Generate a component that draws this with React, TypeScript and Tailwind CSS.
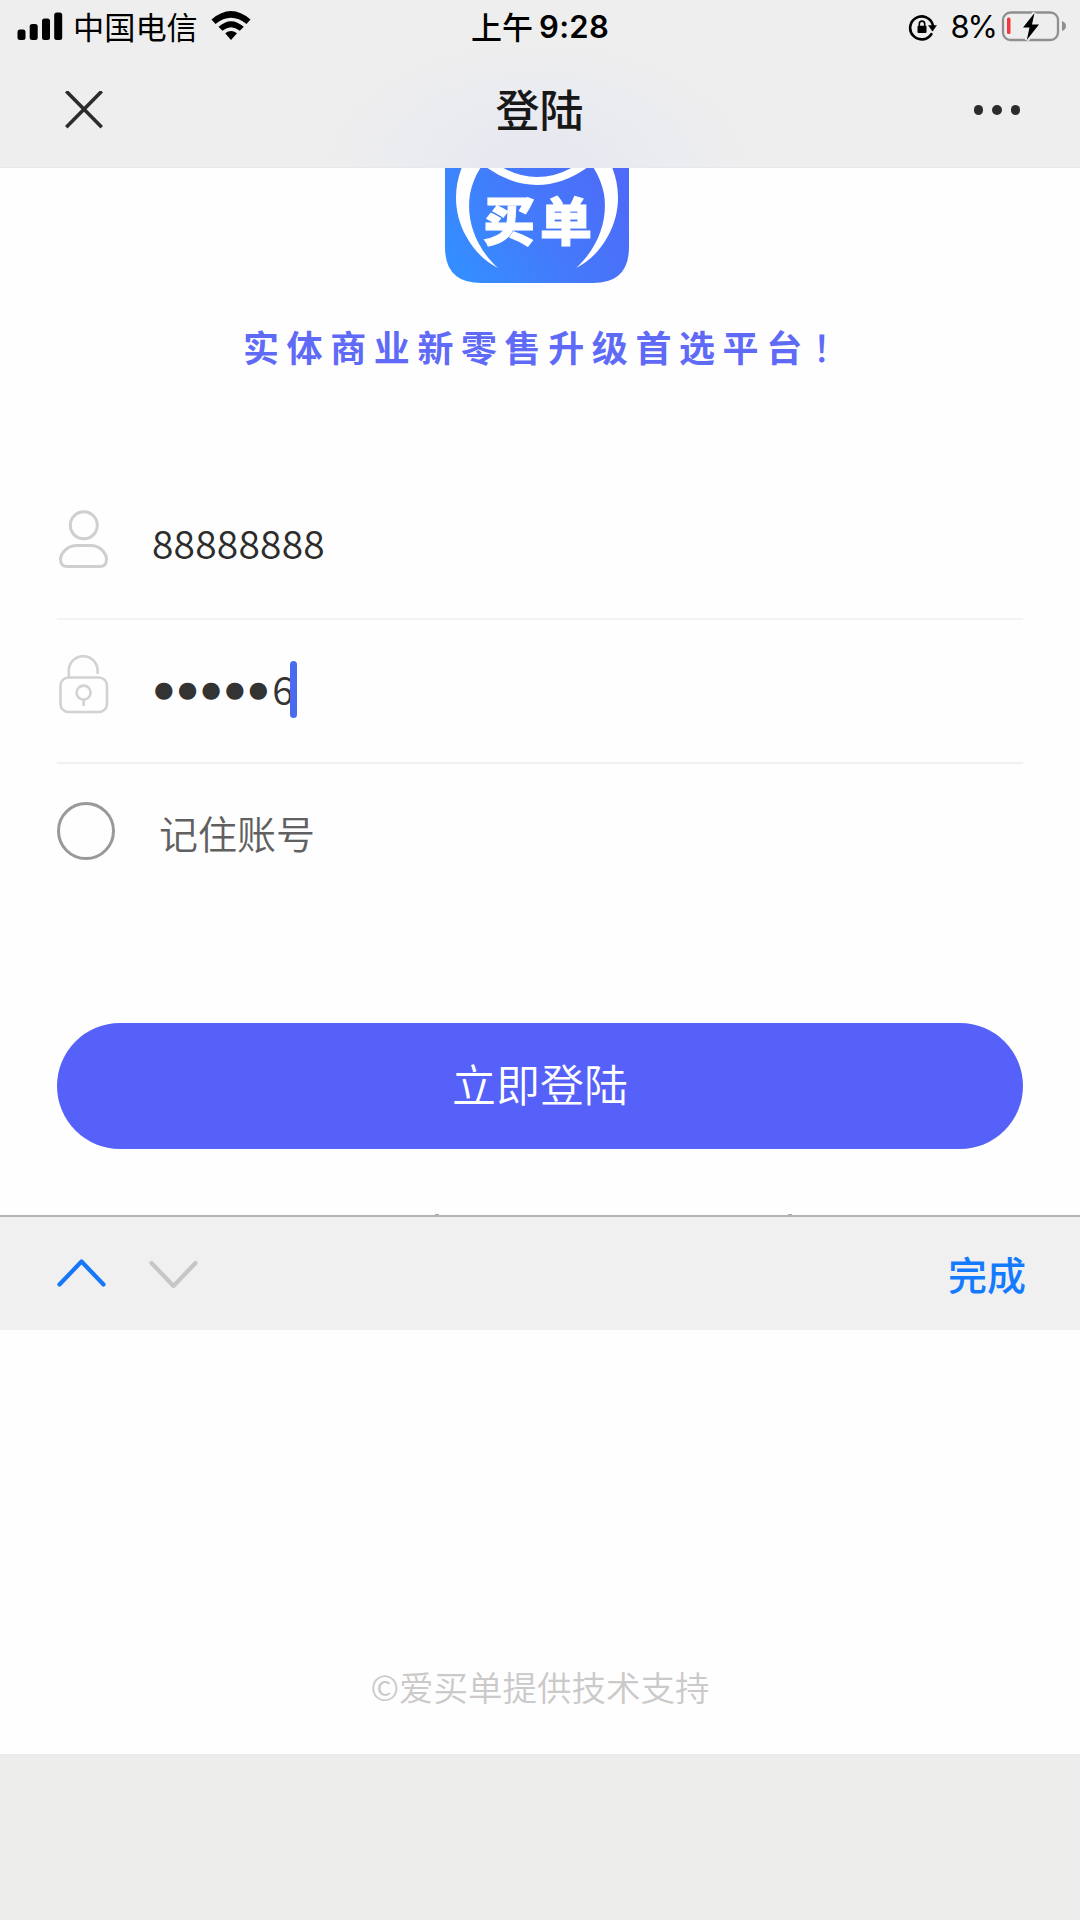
import { useState } from 'react';

const DOTS = [0, 1, 2];

function StatusBar() {
  return (
    <div className="relative flex h-14 items-start justify-between text-black">
      <div className="flex items-start pl-[17px]">
        <svg width="46" height="30" viewBox="0 0 46 30" className="mt-[11px]">
          <rect x="0.5" y="18.5" width="8" height="10.5" rx="2.5" />
          <rect x="12.7" y="13" width="8" height="16" rx="2.5" />
          <rect x="25" y="7.5" width="8" height="21.5" rx="2.5" />
          <rect x="37.2" y="1.5" width="8" height="27.5" rx="2.5" />
        </svg>
        <span className="ml-[10px] mt-[3px] text-[31.200px] leading-[46px]">中国电信</span>
        <svg width="40" height="32" viewBox="0 0 40 32" className="ml-[13px] mt-[10px]">
          <path d="M0.5 9.5 Q20 -7.500 39.500 9.500 L35.500 14 Q20 1.500 4.500 14 Z" />
          <path d="M7.500 16.800 Q20 5.500 32.800 16.800 L28.800 20.800 Q20 13.500 11.400 20.800 Z" />
          <path d="M14.200 23.300 Q20 18.500 26 23.300 L20 30 Z" />
        </svg>
      </div>
      <div className="absolute left-[471px] top-[4px] flex items-center leading-[46px]">
        <span className="-mt-[2px] text-[31px] font-medium">上午</span>
        <span className="ml-[6px] font-['Inter'] text-[31px] font-semibold tracking-[0.3px]">9:28</span>
      </div>
      <div className="flex items-start pr-[13px]">
        <svg width="30" height="28" viewBox="0 0 30 28" className="mt-[13px]">
          <path d="M23.300 21.200 A11.500 11.500 0 1 1 24.800 12" fill="none" stroke="#000" strokeWidth="2.600" strokeLinecap="round" />
          <path d="M20.500 12.500 H28.500 L24.500 18.200 Z" stroke="#000" strokeWidth="0.500" />
          <rect x="9.500" y="12.800" width="9" height="7.200" rx="1" />
          <path d="M11.300 13 V10.800 a2.700 2.700 0 0 1 5.400 0 V13" fill="none" stroke="#000" strokeWidth="1.600" />
        </svg>
        <span className="ml-[12px] mt-[4px] font-['Inter'] text-[31px] leading-[46px] tracking-[-2px]">8%</span>
        <svg width="66" height="34" viewBox="0 0 66 34" className="ml-[5px] mt-[9px]">
          <rect x="2" y="3.500" width="55" height="27.500" rx="7.500" fill="none" stroke="#8f8f8f" strokeWidth="2.300" />
          <rect x="6" y="8.500" width="3.500" height="16.500" rx="1.500" fill="#f2383a" />
          <path d="M61 12 q4 1.500 4 5 q0 3.500 -4 5 z" fill="#8f8f8f" />
          <path d="M33.500 4 L22 18.500 H28.500 L25.800 31 L38 15.500 H31 Z" fill="#000" stroke="#eee" strokeWidth="4" />
          <path d="M33.500 4 L22 18.500 H28.500 L25.800 31 L38 15.500 H31 Z" fill="#000" />
        </svg>
      </div>
    </div>
  );
}

function NavBar() {
  return (
    <div className="flex h-[108px] items-center justify-between pl-[65px] pr-[60px]">
      <button className="w-[40px]" aria-label="关闭">
        <svg width="38" height="38" viewBox="0 0 38 38" stroke="#2c2c2c" strokeWidth="3.600" strokeLinecap="square">
          <path d="M2.500 1.500 L35.500 35 M35.500 1.500 L2.500 35" />
        </svg>
      </button>
      <h1 className="-mt-[4px] text-[44px] font-medium leading-[56px] text-[#181818]">登陆</h1>
      <button className="flex gap-[9px]" aria-label="更多">
        {DOTS.map(d => <span key={d} className="size-[9.300px] rounded-full bg-[#2c2c2c]" />)}
      </button>
    </div>
  );
}

function Logo() {
  return (
    <svg width="184" height="115" viewBox="0 1 184 115">
      <defs>
        <linearGradient id="logoBg" x1="0" y1="0.700" x2="1" y2="0.300">
          <stop offset="0" stopColor="#348eff" />
          <stop offset="0.500" stopColor="#447afb" />
          <stop offset="1" stopColor="#4d6bf8" />
        </linearGradient>
      </defs>
      <path d="M0 0 H184 V80 Q184 116 148 116 H36 Q0 116 0 80 Z" fill="url(#logoBg)" />
      <path d="M17 0 C8 22 9 48 21 69 Q33 91 53 101 C30 80 21 52 25 27 Q28 12 36 0 Z" fill="#fff" />
      <path d="M167 0 C176 22 175 48 163 69 Q151 91 131 101 C154 80 163 52 159 27 Q156 12 148 0 Z" fill="#fff" />
      <path d="M41 0 Q66 18 92 18 Q118 18 143 0 H128 Q111 10 92 10 Q73 10 57 0 Z" fill="#fff" />
      <text x="38" y="74" fontSize="52" fontWeight="900" fill="#fff" stroke="#fff" strokeWidth="1" letterSpacing="5">买单</text>
    </svg>
  );
}

function UserIcon() {
  return (
    <svg width="50" height="60" viewBox="0 0 50 60" fill="none" stroke="#cfcfcf" strokeWidth="3">
      <circle cx="24.800" cy="15.300" r="13.500" />
      <path d="M18 35.500 H31.500 C41 35.500 47.500 43 47.500 49.500 Q47.500 56.500 40.500 56.500 H8.500 Q1.500 56.500 1.500 49.500 C1.500 43 8.500 35.500 18 35.500 Z" />
    </svg>
  );
}

function LockIcon() {
  return (
    <svg width="50" height="60" viewBox="0 0 50 60" fill="none" stroke="#d2d2d2" strokeWidth="2.600">
      <rect x="1.500" y="22.500" width="46.500" height="34.500" rx="8" />
      <path d="M9.800 22 V15.500 A14.400 14.400 0 0 1 38.600 15.500 V18" strokeLinecap="round" />
      <circle cx="24.600" cy="37.600" r="7" />
      <path d="M24.600 45 V51" />
    </svg>
  );
}

export default function App() {
  const [account] = useState('88888888');
  const [remember, setRemember] = useState(false);

  return (
    <div className="flex h-[1920px] w-[1080px] flex-col overflow-hidden bg-[#fefefe] font-['Noto_Sans_CJK_SC',sans-serif]">
      <header className="h-[168px] shrink-0 border-b border-[#e8e8ea] bg-[#eee] bg-[radial-gradient(ellipse_220px_130px_at_537px_167px,#e6e7f0_0%,#ebecf0_60%,#eeeeee_100%)]">
        <StatusBar />
        <NavBar />
      </header>

      <main className="flex h-[1047px] shrink-0 flex-col px-[57px]">
        <div className="flex justify-center pr-[6px]">
          <Logo />
        </div>
        <p className="mt-[36px] h-[54px] whitespace-nowrap pl-[186px] text-[36px] font-bold leading-[54px] tracking-[7.600px] text-[#5f6af6]">
          实体商业新零售升级首选平台<span className="ml-[3px] font-medium">！</span>
        </p>

        {/* Account */}
        <div className="mt-[102px] flex h-[145px] border-b-2 border-[#f3f3f3]">
          <div className="ml-[2px] mt-[35px]"><UserIcon /></div>
          <span className="ml-[43px] mt-[38px] text-[39px] font-[350] leading-[58px] tracking-[0.200px] text-[#2c2c2c]">{account}</span>
        </div>

        {/* Password */}
        <div className="flex h-[144px] border-b-2 border-[#f1f1f1]">
          <div className="ml-[2px] mt-[35px]"><LockIcon /></div>
          <div className="ml-[44px] mt-[40px] flex h-[58px] items-center text-[#333]">
            <span className="ml-px mt-px font-['DejaVu_Sans'] text-[22.500px] tracking-[4px]">●●●●●</span>
            <span className="-mt-[3px] w-[18px] text-[39px] font-[350] leading-[58px]">6</span>
            <span className="h-[57px] w-[7px] rounded-full bg-[#4a6bf0]" />
          </div>
        </div>

        {/* Remember me */}
        <button onClick={() => setRemember(!remember)} className="mt-[37px] flex h-[60px] items-center">
          <span className={`size-[58px] rounded-full border-[3px] border-[#999] ${remember ? 'bg-[#5661f9]' : ''}`} />
          <span className="ml-[44px] mt-[1px] text-[39px] font-[350] leading-[58px] text-[#606060]">记住账号</span>
        </button>

        <button className="mt-[162px] h-[126px] rounded-full bg-[#5661f9] pb-[7px] text-[44px] font-[350] text-white">
          立即登陆
        </button>
        <div className="mt-auto flex justify-between pl-[378px] pr-[231px]">
          <span className="h-px w-[4px] bg-[#aaa]" />
          <span className="h-px w-[4px] bg-[#aaa]" />
        </div>
      </main>

      <div className="flex h-[115px] shrink-0 items-center justify-between border-t-2 border-[#b4b4b4] bg-[#f0f0f0] pl-[57px] pr-[54px]">
        <div className="-mt-px flex gap-[42px]">
          <svg width="50" height="30" viewBox="0 0 50 30" fill="none" stroke="#1877f8" strokeWidth="4.200" strokeLinecap="round" strokeLinejoin="round">
            <path d="M2.500 26.500 L24.500 3.500 L46.500 26.500" />
          </svg>
          <svg width="50" height="30" viewBox="0 0 50 30" fill="none" stroke="#c6c6c6" strokeWidth="4.200" strokeLinecap="round" strokeLinejoin="round">
            <path d="M2.500 5 L24.500 28 L46.500 5" />
          </svg>
        </div>
        <span className="text-[39px] font-medium text-[#147aff]">完成</span>
      </div>

      <footer className="flex h-[424px] shrink-0 items-end justify-center pb-[43px]">
        <span className="text-[34.500px] font-[350] leading-[50px] text-[#cbc9c9]">©爱买单提供技术支持</span>
      </footer>
      <div className="flex-1 border-t-4 border-[#ebebeb] bg-[#ededec]" />
    </div>
  );
}
